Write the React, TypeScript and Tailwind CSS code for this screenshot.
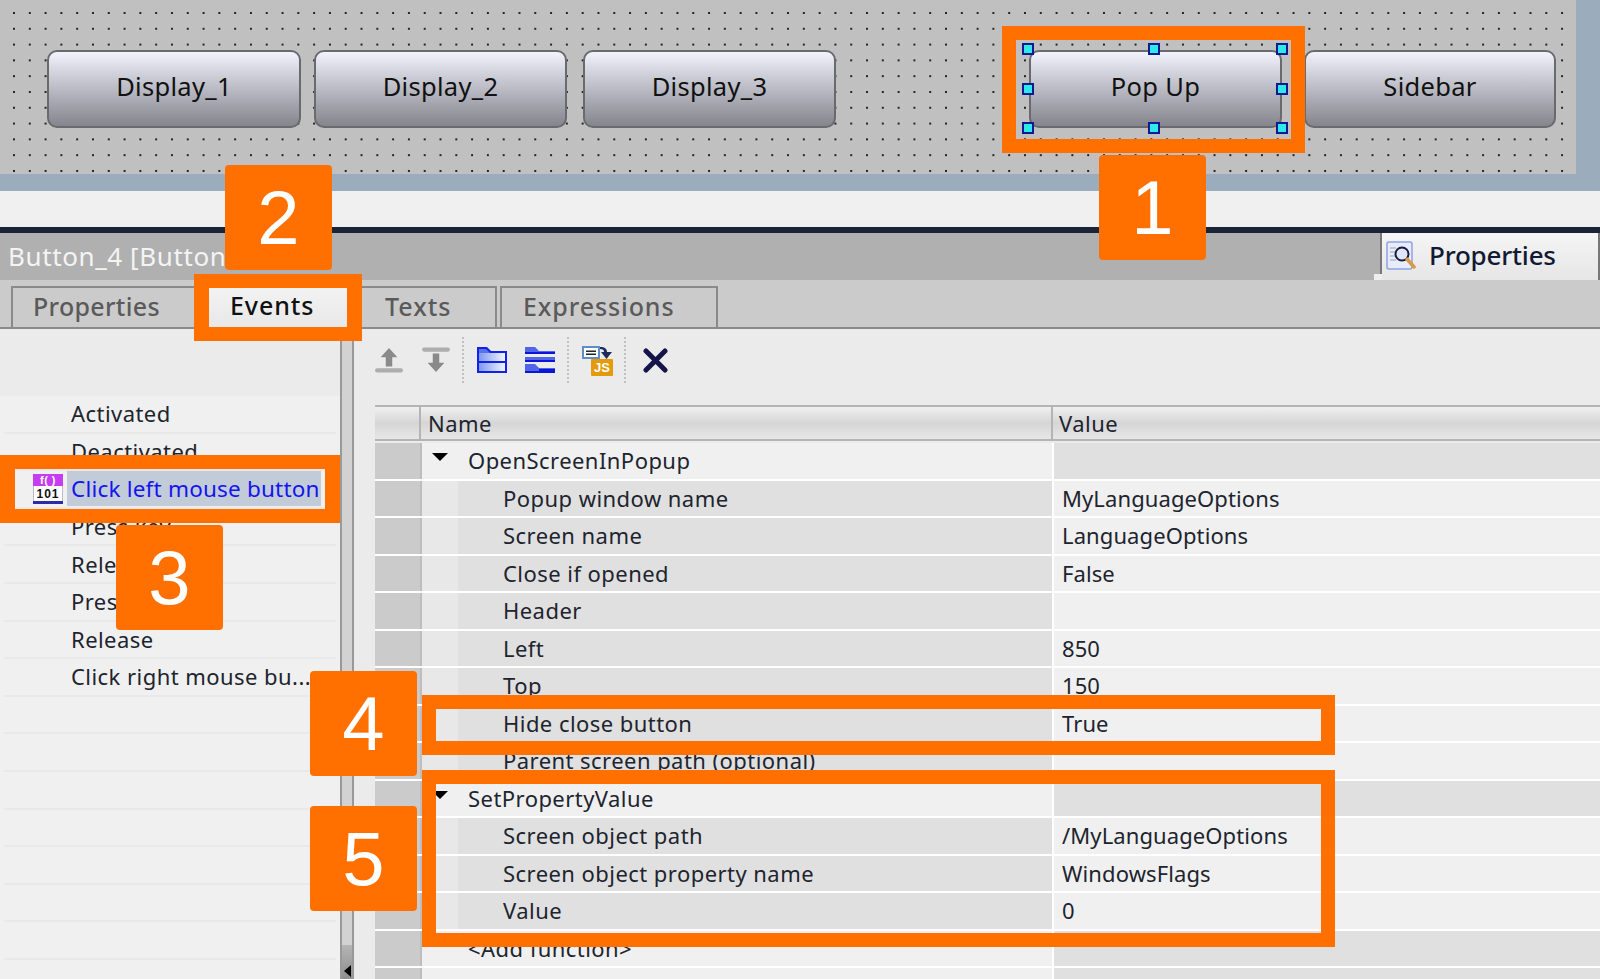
const BUTTONS = [
  { label: "Display_1", className: "ml-[47px] w-[254px]" },
  { label: "Display_2", className: "ml-[13px] w-[253px]" },
  { label: "Display_3", className: "ml-[16px] w-[253px]" },
  { label: "Pop Up", className: "ml-[193px] w-[253px]" },
  { label: "Sidebar", className: "ml-[22px] w-[252px]" },
];

const EVENTS = [
  "Activated",
  "Deactivated",
  "Click left mouse button",
  "Press key",
  "Release key",
  "Press",
  "Release",
  "Click right mouse bu...",
  "",
  "",
  "",
  "",
  "",
  "",
  "",
];

type Row = { name: string; value?: string; group?: boolean; open?: boolean };

const ROWS: Row[] = [
  { name: "OpenScreenInPopup", group: true, open: true },
  { name: "Popup window name", value: "MyLanguageOptions" },
  { name: "Screen name", value: "LanguageOptions" },
  { name: "Close if opened", value: "False" },
  { name: "Header" },
  { name: "Left", value: "850" },
  { name: "Top", value: "150" },
  { name: "Hide close button", value: "True" },
  { name: "Parent screen path (optional)" },
  { name: "SetPropertyValue", group: true, open: true },
  { name: "Screen object path", value: "/MyLanguageOptions" },
  { name: "Screen object property name", value: "WindowsFlags" },
  { name: "Value", value: "0" },
  { name: "<Add function>", group: true },
  { name: "", group: true },
];

const Badge = ({ n, className }: { n: number; className: string }) => (
  <div
    className={`absolute z-20 flex h-[105px] w-[107px] items-center justify-center rounded-[4px] bg-[#ff7000] font-['Liberation_Sans',sans-serif] text-[76px] leading-none text-white ${className}`}
  >
    {n}
  </div>
);

const Handle = ({ className }: { className: string }) => (
  <div
    className={`absolute z-10 h-[12px] w-[12px] border-2 border-[#101a90] bg-[#2fe8e8] ${className}`}
  />
);

const ArrowIcon = ({ down }: { down?: boolean }) => (
  <svg width="28" height="26" viewBox="0 0 30 28" className={down ? "rotate-180" : ""}>
    <path d="M15 1 L24 11 H18.5 V21 H11.5 V11 H6 Z" fill="#8a8a8a" />
    <rect x="0" y="23" width="30" height="4.5" rx="2.2" fill="#adadad" />
  </svg>
);

const FolderOpenIcon = () => (
  <svg width="30" height="28" viewBox="0 0 30 28">
    <defs>
      <linearGradient id="fo" x1="0" y1="0" x2="1" y2="0">
        <stop offset="0" stopColor="#7f98f0" />
        <stop offset="1" stopColor="#f2f5ff" />
      </linearGradient>
    </defs>
    <path d="M0 1 H10 L14 5 H30 V27 H0 Z" fill="#1222e8" />
    <path d="M2 3 H9 L13 7 H2 Z" fill="#5a72e8" />
    <rect x="2" y="7" width="26" height="8" fill="url(#fo)" />
    <rect x="2" y="17" width="26" height="8" fill="url(#fo)" />
  </svg>
);

const FolderStackIcon = () => (
  <svg width="30" height="28" viewBox="0 0 30 28">
    <path d="M0 1 H10 L14 5 H30 V8 H0 Z" fill="#4f66e6" />
    <path d="M0 6 H30 V8 H0 Z" fill="#0b14d8" />
    <path d="M0 11 H30 V15 H0 Z" fill="#4f66e6" />
    <path d="M0 14 H30 V16 H0 Z" fill="#0b14d8" />
    <path d="M0 18 H10 L14 22 H30 V27 H0 Z" fill="#4f66e6" />
    <path d="M14 23 H30 V27 H0 V25 H14 Z" fill="#0b14d8" />
  </svg>
);

const ScriptIcon = () => (
  <svg width="31" height="31" viewBox="0 0 31 31">
    <rect x="0" y="1" width="18" height="13" fill="#5a8fc8" />
    <rect x="2" y="3" width="14" height="9" fill="#fff" />
    <rect x="4" y="5.5" width="10" height="1.5" fill="#222" />
    <rect x="4" y="8.5" width="10" height="1.5" fill="#222" />
    <path d="M18 2 C23 2 25 4 25 7 H30 L24.5 14 L19 7 H22 C22 5 21 4 18 4 Z" fill="#1c2a5c" />
    <rect x="9" y="14" width="22" height="17" rx="1" fill="#e59a0c" />
    <text x="20" y="27" textAnchor="middle" fontFamily="Liberation Sans" fontWeight="700" fontSize="13" fill="#fff">
      JS
    </text>
  </svg>
);

const CloseIcon = () => (
  <svg width="25" height="25" viewBox="0 0 25 25">
    <path d="M3 3 L22 22 M22 3 L3 22" stroke="#14144a" strokeWidth="5" strokeLinecap="round" />
  </svg>
);

const EventIcon = () => (
  <svg width="30" height="30" viewBox="0 0 30 30" className="shrink-0">
    <rect x="0.5" y="0.5" width="29" height="29" fill="#fff" stroke="#b9b9d0" />
    <rect x="0" y="0" width="30" height="12" fill="#c63cf0" />
    <text x="15" y="10" textAnchor="middle" fontFamily="Liberation Sans" fontWeight="700" fontSize="11" fill="#fff">
      f( )
    </text>
    <text x="15" y="24" textAnchor="middle" fontFamily="Liberation Sans" fontWeight="700" fontSize="12" letterSpacing="1" fill="#111">
      101
    </text>
    <rect x="0" y="27" width="30" height="3" fill="#2c2ca8" />
  </svg>
);

const PropertiesIcon = () => (
  <svg width="30" height="30" viewBox="0 0 30 30">
    <rect x="1" y="1" width="25" height="27" rx="2" fill="#e7ecfb" stroke="#8ea3e4" strokeWidth="1.5" />
    <path d="M4 7 H10 M4 11 H9 M4 15 H9 M4 19 H10" stroke="#a0a0b0" strokeWidth="1.2" />
    <circle cx="16" cy="13" r="6.5" fill="#dfe6f5" stroke="#1b1b40" strokeWidth="2" />
    <path d="M21 18 L28 26" stroke="#d89a4a" strokeWidth="3.5" strokeLinecap="round" />
  </svg>
);

const Sep = ({ className }: { className: string }) => (
  <div className={`h-[46px] w-0 border-l-2 border-dotted border-[#c0c0c0] ${className}`} />
);

const App = () => {
  return (
    <div className="relative h-[979px] w-[1600px] overflow-hidden bg-[#f0f0f0] font-['Noto_Sans',sans-serif] text-[22px] text-[#20242e]">
      {/* design canvas */}
      <div className="h-[191px] bg-[#9bacbc]">
        <div className="flex h-[174px] w-[1576px] bg-[#c0c0c0] bg-[radial-gradient(circle_at_1px_1px,#222_0.8px,transparent_1px)] bg-[length:15.8px_15.8px] bg-[position:13px_12px] pt-[50px]">
          {BUTTONS.map((b) => (
            <div
              key={b.label}
              className={`flex h-[78px] items-center justify-center rounded-[10px] border-2 border-[#6a6a6e] bg-gradient-to-b from-[#f1f3fd] to-[#85858d] pb-[5px] text-[25.5px] tracking-[0.3px] text-[#111] ${b.className}`}
            >
              {b.label}
            </div>
          ))}
        </div>
      </div>
      <div className="h-[36px]" />
      <div className="h-[6px] bg-[#1b2436]" />

      {/* inspector title */}
      <div className="flex h-[47px] items-center justify-between bg-[#b0b0b0]">
        <span className="pl-[8px] text-[26px] tracking-[0.6px] text-[#f4f4f4]">Button_4 [Button]</span>
        <div className="relative flex h-full w-[220px] items-center gap-[13px] border-x-2 border-x-[#777] bg-gradient-to-b from-[#f5f5f5] to-[#e6e6e6] pl-[4px] pb-[2px] text-[26px] font-medium tracking-[-0.2px] text-[#111a33]">
          <div className="absolute -left-[8px] bottom-0 h-[6px] w-[8px] bg-[#eeeeee]" />
          <PropertiesIcon />
          Properties
        </div>
      </div>

      {/* tabs */}
      <div className="flex h-[49px] items-end gap-[3px] border-b-2 border-[#8a8a8a] bg-[#cbcbcb] pl-[11px]">
        <div className="flex h-[41px] w-[190px] items-center border-2 border-b-0 border-[#8a8a8a] pb-[2px] pl-[20px] text-[25px] font-medium tracking-[0.3px] text-[#5a5a5a]">
          Properties
        </div>
        <div className="flex h-[41px] w-[146px] items-center bg-gradient-to-b from-[#f3f3f3] to-[#e8e8e8] pb-[2px] pl-[26px] text-[25px] font-medium tracking-[0.9px] text-[#111]">
          Events
        </div>
        <div className="flex h-[41px] w-[144px] items-center border-2 border-b-0 border-l-0 border-[#8a8a8a] pb-[2px] pl-[32px] text-[25px] font-medium tracking-[1px] text-[#5a5a5a]">
          Texts
        </div>
        <div className="flex h-[41px] w-[218px] items-center border-2 border-b-0 border-[#8a8a8a] pb-[2px] pl-[21px] text-[25px] font-medium tracking-[0.9px] text-[#5a5a5a]">
          Expressions
        </div>
      </div>

      {/* events and parameter table */}
      <div className="flex h-[650px]">
        <div className="w-[340px] shrink-0">
          <div className="h-[67px] bg-[#ebebeb]" />
          {EVENTS.map((e, i) => (
            <div key={i} className="mx-[4px] flex h-[37.6px] items-center border-b-2 border-[#e9e9e9] tracking-[0.45px]">
              {i === 2 ? (
                <div className="ml-[29px] flex items-center gap-[4px]">
                  <EventIcon />
                  <div className="flex h-[35px] w-[254px] items-center whitespace-nowrap bg-[#c2ccd8] pl-[4px] text-[22.5px] tracking-[0.2px] text-[#1414f0]">
                    {e}
                  </div>
                </div>
              ) : (
                <span className="pl-[67px]">{e}</span>
              )}
            </div>
          ))}
        </div>

        <div className="relative w-[14px] shrink-0 border-x-2 border-x-[#999] bg-[#d2d2d2]">
          <div className="absolute bottom-0 left-0 flex h-[34px] w-full items-end bg-gradient-to-b from-[#b5b5b5] to-[#8f8f8f] pb-[2px] pl-[2px]">
            <div className="h-0 w-0 border-y-[6px] border-r-[7px] border-y-transparent border-r-black" />
          </div>
        </div>

        <div className="min-w-0 flex-1 bg-[#ebebeb] pl-[21px]">
          <div className="flex h-[76px] items-center pb-[14px]">
            <ArrowIcon />
            <div className="ml-[19px]">
              <ArrowIcon down />
            </div>
            <Sep className="ml-[12px]" />
            <div className="ml-[13px]">
              <FolderOpenIcon />
            </div>
            <div className="ml-[18px]">
              <FolderStackIcon />
            </div>
            <Sep className="ml-[12px]" />
            <div className="ml-[13px]">
              <ScriptIcon />
            </div>
            <Sep className="ml-[11px]" />
            <div className="ml-[17px]">
              <CloseIcon />
            </div>
          </div>

          <div className="flex h-[36px] border-y-2 border-[#b4b4b4] bg-gradient-to-b from-[#f0f0f0] via-[#d6d6d6] to-[#e6e6e6]">
            <div className="w-[46px] border-r-2 border-[#b4b4b4]" />
            <div className="flex w-[632px] items-center border-r-2 border-[#b4b4b4] pl-[7px] tracking-[0.45px]">Name</div>
            <div className="flex items-center pl-[6px] tracking-[0.45px]">Value</div>
          </div>

          <div className="mt-[2px]">
            {ROWS.map((r, i) => (
              <div key={i} className="flex h-[37.5px] border-b-2 border-white tracking-[0.45px]">
                <div className="w-[47px] shrink-0 border-r-2 border-[#bdbdbd] bg-[#cbcbcb]" />
                {r.group ? (
                  <div className="relative flex w-[630px] shrink-0 items-center bg-[#f0f0f0] pl-[46px]">
                    {r.open && (
                      <div className="absolute left-[10px] top-[10px] h-0 w-0 border-x-[8px] border-t-[8px] border-x-transparent border-t-black" />
                    )}
                    {r.name}
                  </div>
                ) : (
                  <div className="flex w-[630px] shrink-0 bg-[#e8e8e8] pl-[36px]">
                    <div className="flex w-full items-center bg-[#e0e0e0] pl-[45px]">{r.name}</div>
                  </div>
                )}
                <div
                  className={`flex flex-1 items-center border-l-2 border-white pl-[8px] tracking-[0.1px] ${
                    r.group ? "bg-[#e0e0e0]" : "bg-[#f0f0f0]"
                  }`}
                >
                  {r.value}
                </div>
              </div>
            ))}
          </div>
        </div>
      </div>

      {/* annotation overlays */}
      <div className="absolute left-[1002px] top-[26px] z-10 h-[127px] w-[303px] border-[14.5px] border-[#ff7000]" />
      <Handle className="left-[1022px] top-[43px]" />
      <Handle className="left-[1148px] top-[43px]" />
      <Handle className="left-[1276px] top-[43px]" />
      <Handle className="left-[1022px] top-[83px]" />
      <Handle className="left-[1276px] top-[83px]" />
      <Handle className="left-[1022px] top-[122px]" />
      <Handle className="left-[1148px] top-[122px]" />
      <Handle className="left-[1276px] top-[122px]" />

      <div className="absolute left-[194px] top-[274px] z-10 h-[67px] w-[168px] border-x-[15px] border-b-[14px] border-t-[14px] border-[#ff7000]" />
      <div className="absolute left-0 top-[455px] z-10 h-[68px] w-[340px] border-x-[15px] border-y-[14px] border-[#ff7000]" />
      <div className="absolute left-[422px] top-[695px] z-10 h-[60px] w-[913px] border-x-[14.5px] border-y-[14px] border-[#ff7000]" />
      <div className="absolute left-[422px] top-[770px] z-10 h-[177px] w-[913px] border-x-[14.5px] border-y-[14px] border-[#ff7000]" />

      <Badge n={1} className="left-[1099px] top-[155px]" />
      <Badge n={2} className="left-[225px] top-[165px]" />
      <Badge n={3} className="left-[116px] top-[525px]" />
      <Badge n={4} className="left-[310px] top-[671px]" />
      <Badge n={5} className="left-[310px] top-[806px]" />
    </div>
  );
};

export default App;
